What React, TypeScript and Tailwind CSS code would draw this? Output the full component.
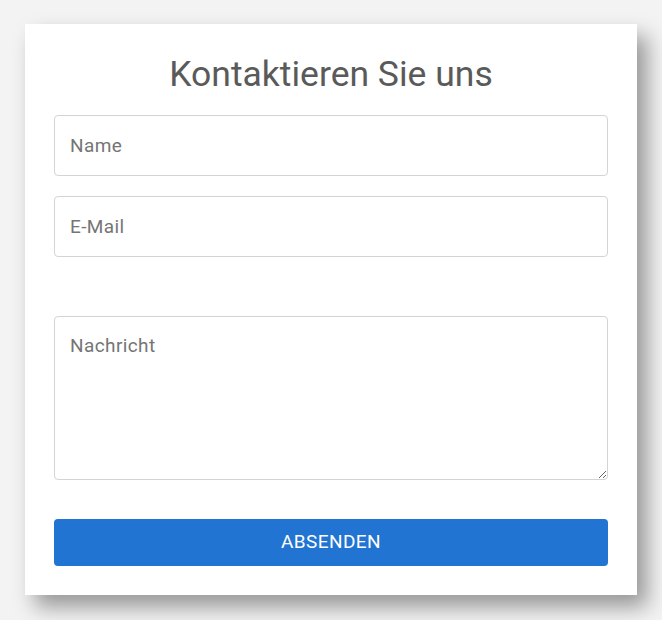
import React from "react";

export default function App() {
  return (
    <div className="min-h-[620px] w-full bg-[#f3f3f3] pt-[24px] pl-[25px]" style={{ fontFamily: "Roboto, 'Liberation Sans', sans-serif" }}>
      <div className="w-[612px] bg-white px-[29px] pt-[30px] pb-[29px] shadow-[10px_12px_20px_rgba(0,0,0,0.38)]">
        <h1 className="text-center text-[35.5px] leading-[40px] font-normal text-[#5a5a5a]">Kontaktieren Sie uns</h1>
        <form className="mt-[21px] flex flex-col">
          <input
            placeholder="Name"
            className="h-[61px] w-full rounded-[4px] border border-[#d4d4d4] px-[15px] text-[19px] tracking-[0.4px] text-[#333] placeholder:text-[#757575] outline-none"
          />
          <input
            placeholder="E-Mail"
            className="mt-[20px] h-[61px] w-full rounded-[4px] border border-[#d4d4d4] px-[15px] text-[19px] tracking-[0.4px] text-[#333] placeholder:text-[#757575] outline-none"
          />
          <textarea
            placeholder="Nachricht"
            className="mt-[59px] h-[164px] w-full rounded-[4px] border border-[#d4d4d4] px-[15px] pt-[17px] text-[19px] tracking-[0.4px] leading-[24px] text-[#333] placeholder:text-[#757575] outline-none"
          />
          <button
            type="button"
            className="mt-[39px] h-[47px] w-full rounded-[4px] bg-[#2174d1] text-[19px] tracking-[0.4px] text-white"
          >
            ABSENDEN
          </button>
        </form>
      </div>
    </div>
  );
}
